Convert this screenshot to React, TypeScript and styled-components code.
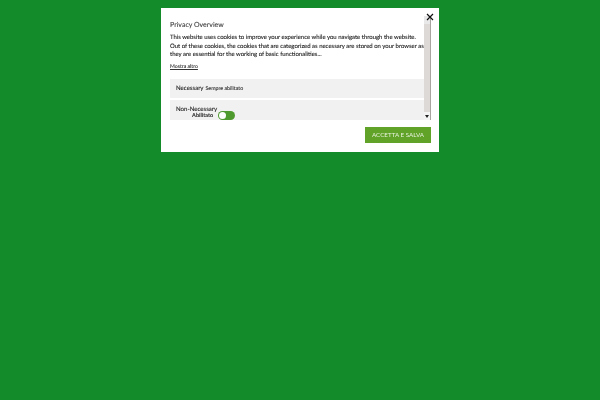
import React from 'react';
import styled, { createGlobalStyle } from 'styled-components';

const GlobalStyle = createGlobalStyle`
  html, body {
    margin: 0;
    height: 100%;
    background-color: #138b2b;
    font-family: Lato, "Open Sans", sans-serif;
    text-rendering: geometricPrecision;
  }
  #root {
    height: 100%;
  }
`;

const App: React.FC = () => {
  return (
    <Page>
      <GlobalStyle />
      <Modal>
        <CloseButton type="button" aria-label="Chiudi">
          <svg width="8" height="8" viewBox="0 0 8 8">
            <path d="M1 1L7 7M7 1L1 7" stroke="#111" strokeWidth="1.2" fill="none" />
          </svg>
        </CloseButton>
        <ScrollArea>
          <Content>
            <Title>Privacy Overview</Title>
            <Description>
              This website uses cookies to improve your experience while you navigate through the website.
              Out of these cookies, the cookies that are categorized as necessary are stored on your browser as
              they are essential for the working of basic functionalities...
            </Description>
            <MoreLink>Mostra altro</MoreLink>
            <CategoryRow>
              <CategoryName>Necessary</CategoryName>
              <AlwaysOn>Sempre abilitato</AlwaysOn>
            </CategoryRow>
            <ToggleRow>
              <ToggleText>
                <CategoryName>Non-Necessary</CategoryName>
                <SwitchLabel>Abilitato</SwitchLabel>
              </ToggleText>
              <Switch />
            </ToggleRow>
          </Content>
          <Scrollbar>
            <ScrollArrow />
            <ScrollThumb />
            <ScrollArrow $down>
              <svg width="4" height="3" viewBox="0 0 4 3">
                <path d="M0 0H4L2 3Z" fill="#222" />
              </svg>
            </ScrollArrow>
          </Scrollbar>
        </ScrollArea>
        <Footer>
          <AcceptButton type="button">ACCETTA E SALVA</AcceptButton>
        </Footer>
      </Modal>
    </Page>
  );
};

const Page = styled.div`
  height: 100%;
  display: flex;
  justify-content: center;
  align-items: flex-start;
  padding-top: 8px;
  box-sizing: border-box;
`;

/* the reference is soft, a slight blur also drops the coloured text fringes */
const Modal = styled.div`
  position: relative;
  width: 278px;
  height: 144px;
  display: flex;
  flex-direction: column;
  padding: 8px 8px 9px 9px;
  box-sizing: border-box;
  background-color: white;
  filter: blur(0.25px);
`;

const CloseButton = styled.button`
  position: absolute;
  top: 5px;
  right: 5px;
  width: 8px;
  height: 8px;
  padding: 0;
  display: flex;
  border: 0;
  background: none;
`;

const ScrollArea = styled.div`
  height: 104px;
  display: flex;
  overflow: hidden;
`;

const Content = styled.div`
  width: 254px;
  flex-shrink: 0;
  padding-top: 4px;
  color: #333;
  -webkit-text-stroke: 0.1px currentColor;
`;

const Title = styled.div`
  font-size: 7px;
  line-height: 10px;
  color: #444;
  margin-bottom: 4px;
`;

const Description = styled.div`
  width: 254.5px;
  font-size: 5.98px;
  line-height: 8.5px;
  color: #222;
`;

const MoreLink = styled.a`
  display: block;
  margin: 4.5px 0 7.5px;
  font-size: 5.2px;
  line-height: 7px;
  color: #333;
  text-decoration: underline;
`;

const CategoryRow = styled.div`
  height: 19px;
  margin-bottom: 2px;
  padding: 1px 6px 0;
  display: flex;
  align-items: center;
  gap: 2px;
  box-sizing: border-box;
  background-color: #f1f1f1;
  white-space: nowrap;
`;

const ToggleRow = styled.div`
  height: 20px;
  padding: 6.5px 6px 0;
  display: flex;
  align-items: flex-start;
  gap: 1px;
  box-sizing: border-box;
  background-color: #f1f1f1;
  white-space: nowrap;
`;

const ToggleText = styled.div`
  display: flex;
  flex-direction: column;
  align-items: flex-end;
`;

const CategoryName = styled.span`
  font-size: 6.1px;
  line-height: 8px;
  color: #222;
`;

const AlwaysOn = styled.span`
  font-size: 5.3px;
  line-height: 8px;
  color: #333;
`;

const SwitchLabel = styled.span`
  margin-top: -0.5px;
  padding-right: 4px;
  font-size: 5.5px;
  line-height: 5px;
  font-weight: 700;
  color: #333;
`;

const Switch = styled.span`
  position: relative;
  width: 17px;
  height: 9px;
  margin-top: 4.5px;
  border-radius: 4.5px;
  background-color: #4f9a2f;
  &::before {
    content: '';
    position: absolute;
    top: 1px;
    left: 1px;
    width: 7px;
    height: 7px;
    border-radius: 50%;
    background-color: white;
  }
`;

const Scrollbar = styled.div`
  width: 7px;
  flex-shrink: 0;
  display: flex;
  flex-direction: column;
  border-right: 1px solid #a8a4a0;
  box-sizing: border-box;
  background-color: #f1f1f1;
`;

const ScrollArrow = styled.div<{ $down?: boolean }>`
  height: 8px;
  display: flex;
  align-items: center;
  justify-content: center;
  background-color: ${(props) => (props.$down ? '#f4f4f4' : '#e8e8e8')};
`;

const ScrollThumb = styled.div`
  flex: 1;
  background-color: #dcd9d6;
`;

const Footer = styled.div`
  flex: 1;
  display: flex;
  justify-content: flex-end;
  align-items: flex-end;
`;

const AcceptButton = styled.button`
  width: 66px;
  height: 16px;
  padding: 0;
  border: 0;
  background-color: #61a229;
  color: #e9f3e0;
  font-family: Lato, sans-serif;
  font-size: 6.25px;
  line-height: 16px;
`;

export default App;
